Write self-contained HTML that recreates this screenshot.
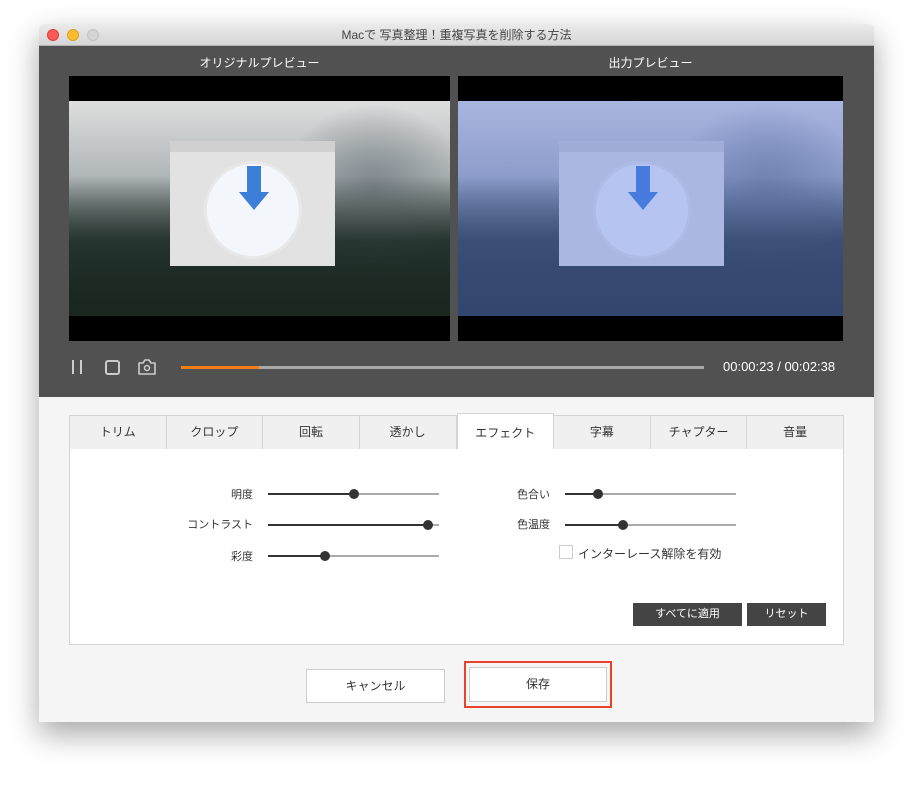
<!DOCTYPE html>
<html><head><meta charset="utf-8"><style>
*{margin:0;padding:0;box-sizing:border-box}
body{width:911px;height:790px;background:#fff;font-family:"Liberation Sans","Noto Sans CJK JP",sans-serif;position:relative;overflow:hidden}
.a{position:absolute}
.win{left:39px;top:24px;width:835px;height:698px;background:#f5f5f5;box-shadow:0 12px 30px rgba(0,0,0,.35);border-radius:5px 5px 0 0;overflow:hidden}
.tb{left:0;top:0;width:835px;height:22px;background:linear-gradient(#ebebeb,#d6d6d6);border-bottom:1px solid #b4b4b4;text-align:center;font-size:12px;color:#444;line-height:22px}
.dot{top:5px;width:12px;height:12px;border-radius:50%}
.dark{left:0;top:22px;width:835px;height:351px;background:#515151}
.pv{width:381px;height:265px;background:#000;overflow:hidden}
.img{left:0;top:25px;width:100%;height:215px;background:
 linear-gradient(180deg,rgba(0,0,0,0) 35%,rgba(20,35,30,.75) 65%,#1a2620 100%),
 radial-gradient(ellipse 35% 55% at 80% 40%,#7e878d,rgba(0,0,0,0) 70%),
 linear-gradient(180deg,#dedede 0%,#b0b6b8 35%,#5f6a66 65%,#2a3832 100%)}
.iw{left:101px;top:65px;width:165px;height:125px;background:#e2e2e2;border-top:11px solid #d0d0d0}
.circ{left:34px;top:9px;width:98px;height:98px;border-radius:50%;background:#f3f7fb;border:3px solid #e8e8e8}
.arr{left:32px;top:26px;width:0;height:0;border-left:15px solid transparent;border-right:15px solid transparent;border-top:18px solid #3b7fd9}
.arrs{left:40px;top:2px;width:14px;height:26px;background:#3b7fd9}
.lbl{font-size:12px;color:#fff;top:8px;text-align:center;width:381px}
.tabs{left:30px;top:391px;width:775px;height:35px;border:1px solid #d4d4d4;background:#f0f0f0;display:flex}
.tab{flex:1;text-align:center;font-size:12px;line-height:33px;color:#333;border-right:1px solid #d4d4d4}
.tab:last-child{border-right:none}
.tab.on{background:#fff;margin-top:-3px;line-height:39px;border:1px solid #d4d4d4;border-bottom:none;height:36px}
.panel{left:30px;top:425px;width:775px;height:196px;background:#fff;border:1px solid #d4d4d4;border-top:none}
.sl{height:2px;background:#aaa}
.sf{height:2px;background:#333;top:0;left:0}
.kn{width:10px;height:10px;border-radius:50%;background:#333;top:-4px}
.lb{font-size:11px;color:#333;text-align:right}
.btn{background:#444;color:#fff;font-size:11px;text-align:center;line-height:23px;height:23px}
</style></head><body>
<div class="a win">
 <div class="a tb">Macで 写真整理！重複写真を削除する方法</div>
 <div class="a dot" style="left:8px;background:#fc5b57;border:1px solid #df3d3a"></div>
 <div class="a dot" style="left:28px;background:#fdbc2e;border:1px solid #dd9e23"></div>
 <div class="a dot" style="left:48px;background:#d5d5d5;border:1px solid #c2c2c2"></div>
 <div class="a dark">
  <div class="a lbl" style="left:30px">オリジナルプレビュー</div>
  <div class="a lbl" style="left:421px">出力プレビュー</div>
  <div class="a pv" style="left:30px;top:30px">
   <div class="a img"></div>
   <div class="a iw"><div class="a circ"><div class="a arrs"></div><div class="a arr" style="top:28px"></div></div></div>
  </div>
  <div class="a pv" style="left:419px;top:30px;width:385px">
   <div class="a img"></div>
   <div class="a iw"><div class="a circ"><div class="a arrs"></div><div class="a arr" style="top:28px"></div></div></div>
   <div class="a" style="left:0;top:25px;width:385px;height:215px;background:rgba(90,120,230,.4)"></div>
  </div>
  <div class="a" style="left:33px;top:314px;width:2px;height:14px;background:#ccc"></div>
  <div class="a" style="left:41px;top:314px;width:2px;height:14px;background:#ccc"></div>
  <div class="a" style="left:66px;top:314px;width:15px;height:15px;border:2px solid #ccc;border-radius:3px"></div>
  <svg class="a" style="left:98px;top:312px" width="20" height="18" viewBox="0 0 20 18"><path d="M2 5h4l2-3h4l2 3h4v11H2z" fill="none" stroke="#ccc" stroke-width="1.6" stroke-linejoin="round"/><circle cx="10" cy="10" r="2.5" fill="none" stroke="#ccc" stroke-width="1.5"/></svg>
  <div class="a" style="left:142px;top:320px;width:523px;height:3px;background:#a8a8a8"></div>
  <div class="a" style="left:142px;top:320px;width:78px;height:3px;background:#f57f17"></div>
  <div class="a" style="left:684px;top:313px;font-size:13px;color:#fff">00:00:23 / 00:02:38</div>
 </div>
 <div class="a tabs">
  <div class="tab">トリム</div><div class="tab">クロップ</div><div class="tab">回転</div><div class="tab">透かし</div><div class="tab on">エフェクト</div><div class="tab">字幕</div><div class="tab">チャプター</div><div class="tab">音量</div>
 </div>
 <div class="a panel">
  <div class="a lb" style="left:80px;top:37px;width:103px">明度</div>
  <div class="a sl" style="left:198px;top:44px;width:171px"><div class="a sf" style="width:86px"></div><div class="a kn" style="left:81px"></div></div>
  <div class="a lb" style="left:80px;top:67px;width:103px">コントラスト</div>
  <div class="a sl" style="left:198px;top:75px;width:171px"><div class="a sf" style="width:160px"></div><div class="a kn" style="left:155px"></div></div>
  <div class="a lb" style="left:80px;top:99px;width:103px">彩度</div>
  <div class="a sl" style="left:198px;top:106px;width:171px"><div class="a sf" style="width:57px"></div><div class="a kn" style="left:52px"></div></div>
  <div class="a lb" style="left:400px;top:37px;width:80px">色合い</div>
  <div class="a sl" style="left:495px;top:44px;width:171px"><div class="a sf" style="width:33px"></div><div class="a kn" style="left:28px"></div></div>
  <div class="a lb" style="left:400px;top:67px;width:80px">色温度</div>
  <div class="a sl" style="left:495px;top:75px;width:171px"><div class="a sf" style="width:58px"></div><div class="a kn" style="left:53px"></div></div>
  <div class="a" style="left:489px;top:96px;width:14px;height:14px;border:1px solid #ccc"></div>
  <div class="a" style="left:508px;top:96px;font-size:12px;color:#333">インターレース解除を有効</div>
  <div class="a btn" style="left:563px;top:154px;width:109px">すべてに適用</div>
  <div class="a btn" style="left:677px;top:154px;width:79px">リセット</div>
 </div>
 <div class="a" style="left:267px;top:645px;width:139px;height:34px;background:#fff;border:1px solid #ccc;font-size:12px;text-align:center;line-height:32px;color:#333">キャンセル</div>
 <div class="a" style="left:425px;top:637px;width:148px;height:47px;border:2px solid #e8412c"></div>
 <div class="a" style="left:430px;top:643px;width:138px;height:35px;background:#fff;border:1px solid #ccc;font-size:12px;text-align:center;line-height:33px;color:#333">保存</div>
</div>
</body></html>
